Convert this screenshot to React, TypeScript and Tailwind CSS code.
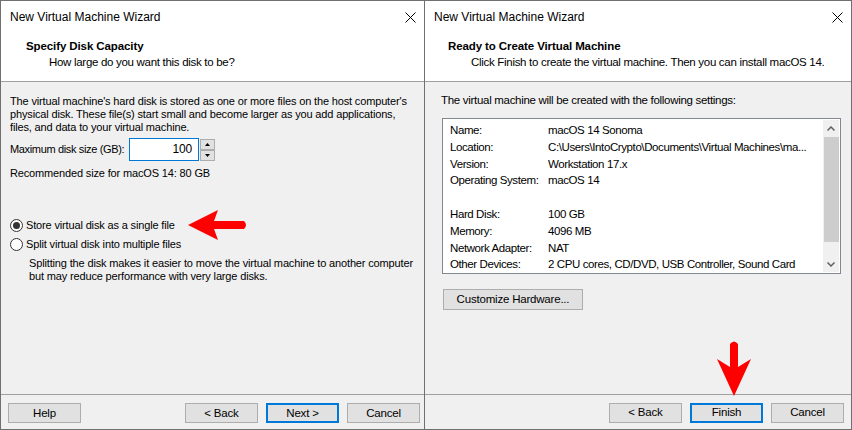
import React from 'react'

const UI = '"Liberation Sans", "DejaVu Sans", sans-serif'

function CloseIcon() {
  return (
    <svg width="11" height="11" viewBox="0 0 11 11" className="shrink-0">
      <path d="M0.5 0.5 L10.5 10.5 M10.5 0.5 L0.5 10.5" stroke="#000" strokeWidth="1" fill="none" />
    </svg>
  )
}

function TitleBar() {
  return (
    <div className="h-[32px] flex items-center justify-between pl-[9px] pr-[8px] text-[12px] text-black">
      <span>New Virtual Machine Wizard</span>
      <CloseIcon />
    </div>
  )
}

function Header({ title, subtitle, indent }: { title: string; subtitle: string; indent: 'left' | 'right' }) {
  return (
    <div className="h-[49px] border-b border-[#a0a0a0] text-[11.5px] tracking-[-0.3px] leading-[16px] pt-[5px] whitespace-nowrap">
      <div className={`font-bold tracking-[-0.1px] ${indent === 'left' ? 'pl-[25px]' : 'pl-[23px]'}`}>{title}</div>
      <div className={indent === 'left' ? 'pl-[48px]' : 'pl-[46px]'}>{subtitle}</div>
    </div>
  )
}

function Btn({ label, primary, w = 'w-[73px] h-[20px]' }: { label: string; primary?: boolean; w?: string }) {
  return (
    <div
      className={`${w} shrink-0 flex items-center justify-center text-[11.5px] tracking-[-0.2px] bg-[#e1e1e1] ${
        primary ? 'border-2 border-[#0078d7]' : 'border border-[#adadad]'
      }`}
    >
      {label}
    </div>
  )
}

function Radio({ checked, label }: { checked?: boolean; label: string }) {
  return (
    <div className="flex items-center h-[16px] gap-[3px] pl-[9px]">
      <div className="w-[13px] h-[13px] rounded-full border border-[#333] bg-white flex items-center justify-center">
        {checked && <div className="w-[7px] h-[7px] rounded-full bg-[#333]" />}
      </div>
      <span>{label}</span>
    </div>
  )
}

function LeftArrow() {
  return (
    <svg width="64" height="34" viewBox="0 0 64 34" className="absolute left-[186px] top-[208px]">
      <path d="M2 17 L32 2 L28 13 L58 13 Q62 17 58 21 L28 21 L32 32 Z" fill="#f00" />
    </svg>
  )
}

function DownArrow() {
  return (
    <svg width="38" height="58" viewBox="0 0 38 58" className="absolute left-[715px] top-[339px]">
      <path d="M15 5 Q19 0 23 5 L23 28 L36 20 L19 57 L2 20 L15 28 Z" fill="#f00" />
    </svg>
  )
}

const rows: [string, string][] = [
  ['Name:', 'macOS 14 Sonoma'],
  ['Location:', 'C:\\Users\\IntoCrypto\\Documents\\Virtual Machines\\ma...'],
  ['Version:', 'Workstation 17.x'],
  ['Operating System:', 'macOS 14'],
  ['', ''],
  ['Hard Disk:', '100 GB'],
  ['Memory:', '4096 MB'],
  ['Network Adapter:', 'NAT'],
  ['Other Devices:', '2 CPU cores, CD/DVD, USB Controller, Sound Card'],
]

export default function App() {
  return (
    <div className="relative w-[852px] h-[430px] flex bg-[#f0f0f0] text-black" style={{ fontFamily: UI }}>
      {/* left wizard */}
      <div className="w-[425px] shrink-0 h-[430px] flex flex-col border border-[#707070]">
        <div className="bg-white">
          <TitleBar />
          <Header title="Specify Disk Capacity" subtitle="How large do you want this disk to be?" indent="left" />
        </div>
        <div className="flex-1 flex flex-col text-[11px] leading-[13px] tracking-[-0.15px] whitespace-nowrap">
          <div className="pt-[13px] pl-[9px]">
            The virtual machine's hard disk is stored as one or more files on the host computer's
            <br />
            physical disk. These file(s) start small and become larger as you add applications,
            <br />
            files, and data to your virtual machine.
          </div>
          <div className="flex items-center pl-[9px] mt-[4px] h-[23px]">
            <span className="w-[119px] tracking-[-0.35px]">Maximum disk size (GB):</span>
            <div className="w-[70px] h-[23px] border border-[#0078d7] bg-white flex items-center justify-end pr-[6px] text-[12px]">
              100
            </div>
            <div className="flex flex-col ml-[1px] h-[22px] justify-between">
              <div className="w-[15px] h-[11px] border border-[#adadad] bg-[#e1e1e1] flex items-center justify-center">
                <svg width="5" height="3" viewBox="0 0 5 3"><path d="M2.5 0 L5 3 L0 3 Z" fill="#000" /></svg>
              </div>
              <div className="w-[15px] h-[11px] border border-[#adadad] bg-[#e1e1e1] flex items-center justify-center">
                <svg width="5" height="3" viewBox="0 0 5 3"><path d="M0 0 L5 0 L2.5 3 Z" fill="#000" /></svg>
              </div>
            </div>
          </div>
          <div className="pl-[9px] mt-[6px]">Recommended size for macOS 14: 80 GB</div>
          <div className="mt-[37px] flex flex-col gap-[3px]">
            <Radio checked label="Store virtual disk as a single file" />
            <Radio label="Split virtual disk into multiple files" />
          </div>
          <div className="pl-[28px] mt-[5px]">
            Splitting the disk makes it easier to move the virtual machine to another computer
            <br />
            but may reduce performance with very large disks.
          </div>
          <div className="flex-1" />
          <div className="h-[35px] border-t border-[#a0a0a0] flex items-start pt-[8px] pl-[7px] pr-[4px]">
            <Btn label="Help" />
            <div className="flex-1" />
            <div className="flex gap-[8px]">
              <Btn label="< Back" />
              <Btn label="Next >" primary />
              <Btn label="Cancel" />
            </div>
          </div>
        </div>
      </div>

      {/* right wizard */}
      <div className="flex-1 min-w-0 h-[430px] flex flex-col border border-[#707070] border-l-0">
        <div className="bg-white">
          <TitleBar />
          <Header
            title="Ready to Create Virtual Machine"
            subtitle="Click Finish to create the virtual machine. Then you can install macOS 14."
            indent="right"
          />
        </div>
        <div className="flex-1 flex flex-col text-[11.5px] tracking-[-0.3px]">
          <div className="pt-[10px] pl-[16px] leading-[16px] whitespace-nowrap">
            The virtual machine will be created with the following settings:
          </div>
          <div className="ml-[17px] mr-[10px] mt-[10px] h-[156px] border border-[#828790] bg-white flex">
            <div className="flex-1 min-w-0 pl-[7px] pt-[3px] leading-[16.8px] overflow-hidden tracking-[-0.4px]">
              {rows.map(([k, v], i) => (
                <div key={i} className="flex h-[16.8px] whitespace-nowrap">
                  <span className="w-[98px] shrink-0">{k}</span>
                  <span>{v}</span>
                </div>
              ))}
            </div>
            <div className="w-[16px] my-[1px] mr-[1px] bg-[#f0f0f0] flex flex-col items-center">
              <div className="h-[17px] flex items-center justify-center">
                <svg width="8" height="5" viewBox="0 0 8 5"><path d="M0.5 4.5 L4 1 L7.5 4.5" stroke="#606060" strokeWidth="1.5" fill="none" /></svg>
              </div>
              <div className="w-[15px] h-[105px] bg-[#cdcdcd]" />
              <div className="flex-1 flex items-end justify-center pb-[5px]">
                <svg width="8" height="5" viewBox="0 0 8 5"><path d="M0.5 0.5 L4 4 L7.5 0.5" stroke="#606060" strokeWidth="1.5" fill="none" /></svg>
              </div>
            </div>
          </div>
          <div className="ml-[18px] mt-[15px]">
            <Btn label="Customize Hardware..." w="w-[140px] h-[21px]" />
          </div>
          <div className="flex-1" />
          <div className="h-[35px] border-t border-[#a0a0a0] flex items-start justify-end pt-[8px] pr-[7px] gap-[8px]">
            <Btn label="< Back" />
            <Btn label="Finish" primary />
            <Btn label="Cancel" />
          </div>
        </div>
      </div>

      <LeftArrow />
      <DownArrow />
    </div>
  )
}
